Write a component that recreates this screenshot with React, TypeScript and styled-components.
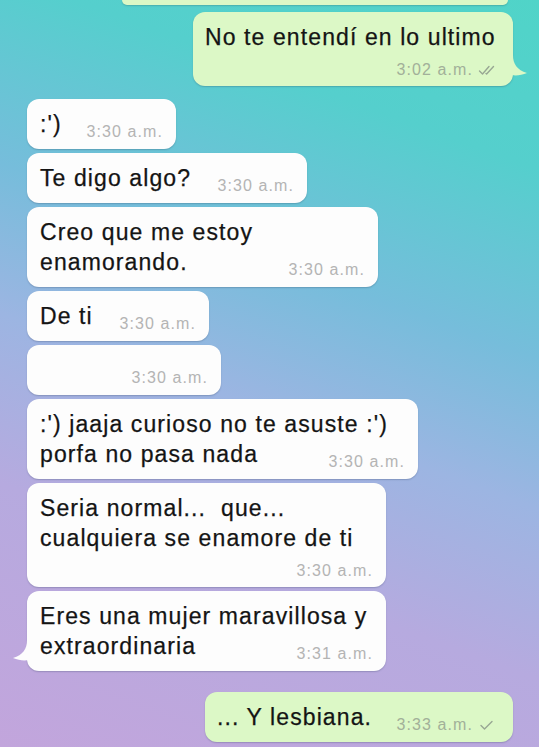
import React from "react";
import styled, { createGlobalStyle, css } from "styled-components";

const Global = createGlobalStyle`
  html, body { margin: 0; padding: 0; }
  body {
    width: 539px;
    height: 747px;
    overflow: hidden;
    font-family: "Liberation Sans", Arial, Helvetica, sans-serif;
  }
`;

type Side = "in" | "out";

const Screen = styled.div`
  width: 539px;
  height: 747px;
  box-sizing: border-box;
  padding: 0 26px 0 27px;
  display: flex;
  flex-direction: column;
  overflow: hidden;
  background: linear-gradient(
    200deg,
    #50d4c8 0%,
    #55cfcd 18%,
    #76bddb 38%,
    #9cb5e2 54%,
    #b6aadf 72%,
    #c2a5dc 100%
  );
`;

const PartialBubble = styled.div`
  align-self: flex-end;
  width: 386px;
  height: 5px;
  margin-right: 5px;
  background: #dcf8c6;
  border-radius: 0 0 12px 12px;
  box-shadow: 0 1px 1.5px rgba(30, 60, 70, 0.22);
`;

const Bubble = styled.div<{ $side: Side; $w: number; $mt: number; $stack?: boolean }>`
  position: relative;
  box-sizing: border-box;
  width: ${(p) => p.$w}px;
  margin-top: ${(p) => p.$mt}px;
  align-self: ${(p) => (p.$side === "out" ? "flex-end" : "flex-start")};
  background: ${(p) => (p.$side === "out" ? "#dcf8c6" : "#fdfdfd")};
  color: ${(p) => (p.$side === "out" ? "#dcf8c6" : "#fdfdfd")};
  border-radius: 12px;
  box-shadow: 0 1px 1.5px rgba(30, 50, 80, 0.24);
  padding: 10px ${(p) => (p.$side === "out" ? 18 : 13)}px ${(p) => (p.$stack ? 7 : 10)}px
    ${(p) => (p.$side === "out" ? 12 : 13)}px;
  display: flex;
  flex-direction: column;
`;

const Line = styled.div`
  font-size: 23px;
  line-height: 30px;
  height: 30px;
  letter-spacing: 1.1px;
  color: #141414;
  -webkit-text-stroke: 0.25px #141414;
  white-space: pre;
`;

const LastRow = styled.div`
  display: flex;
  justify-content: space-between;
  align-items: flex-end;
`;

const MetaRow = styled.div<{ $stack?: boolean }>`
  display: flex;
  justify-content: flex-end;
  align-items: flex-end;
  flex-shrink: 0;
  ${(p) =>
    p.$stack
      ? css`
          height: 27px;
        `
      : css`
          margin-bottom: -2px;
        `}
`;

const Meta = styled.span<{ $side: Side }>`
  display: inline-flex;
  align-items: center;
  gap: 5px;
  font-size: 16px;
  line-height: 18px;
  letter-spacing: 1.1px;
  white-space: nowrap;
  color: ${(p) => (p.$side === "out" ? "#a2b099" : "#b4b4b4")};
`;

const Tick = styled.svg`
  width: 17px;
  height: 11px;
  flex-shrink: 0;
`;

const Tail = styled.svg<{ $side: Side }>`
  position: absolute;
  bottom: 9px;
  width: 20px;
  height: 22px;
  ${(p) =>
    p.$side === "out"
      ? css`
          right: -14px;
        `
      : css`
          left: -14px;
          transform: scaleX(-1);
        `}
`;

type Msg = {
  side: Side;
  lines: string[];
  time: string;
  w: number;
  mt: number;
  stack?: boolean;
  tail?: boolean;
  ticks?: 1 | 2;
};

const messages: Msg[] = [
  { side: "out", lines: ["No te entendí en lo ultimo"], time: "3:02 a.m.", w: 320, mt: 7, stack: true, tail: true, ticks: 2 },
  { side: "in", lines: [":')"], time: "3:30 a.m.", w: 149, mt: 13 },
  { side: "in", lines: ["Te digo algo?"], time: "3:30 a.m.", w: 280, mt: 4 },
  { side: "in", lines: ["Creo que me estoy", "enamorando."], time: "3:30 a.m.", w: 351, mt: 4 },
  { side: "in", lines: ["De ti"], time: "3:30 a.m.", w: 182, mt: 4 },
  { side: "in", lines: [""], time: "3:30 a.m.", w: 194, mt: 4 },
  { side: "in", lines: [":') jaaja curioso no te asuste :')", "porfa no pasa nada"], time: "3:30 a.m.", w: 391, mt: 4 },
  { side: "in", lines: ["Seria normal...  que...", "cualquiera se enamore de ti"], time: "3:30 a.m.", w: 359, mt: 4, stack: true },
  { side: "in", lines: ["Eres una mujer maravillosa y", "extraordinaria"], time: "3:31 a.m.", w: 359, mt: 4, tail: true },
  { side: "out", lines: ["... Y lesbiana."], time: "3:33 a.m.", w: 308, mt: 21, ticks: 1 },
];

function Ticks({ n }: { n: 1 | 2 }) {
  return (
    <Tick viewBox="0 0 17 11" fill="none" stroke="#98a793" strokeWidth="1.4" strokeLinecap="round" strokeLinejoin="round">
      {n === 2 ? (
        <>
          <path d="M1.5 6 L4.5 9 L11 1.5" />
          <path d="M8 8.5 L8.6 9 L15.5 1.5" />
        </>
      ) : (
        <path d="M3 5.5 L6.5 9 L14 1.5" />
      )}
    </Tick>
  );
}

function Message({ m }: { m: Msg }) {
  const meta = (
    <MetaRow $stack={m.stack}>
      <Meta $side={m.side}>
        {m.time}
        {m.ticks ? <Ticks n={m.ticks} /> : null}
      </Meta>
    </MetaRow>
  );
  const head = m.stack ? m.lines : m.lines.slice(0, -1);
  const last = m.lines[m.lines.length - 1];
  return (
    <Bubble $side={m.side} $w={m.w} $mt={m.mt} $stack={m.stack}>
      {head.map((l, i) => (
        <Line key={i}>{l}</Line>
      ))}
      {m.stack ? (
        meta
      ) : (
        <LastRow>
          <Line>{last}</Line>
          {meta}
        </LastRow>
      )}
      {m.tail ? (
        <Tail $side={m.side} viewBox="0 0 20 22">
          <path d="M0 0 L6 0 C6 9 10 15 20 18 C13 21 6 21 0 19 Z" fill="currentColor" />
        </Tail>
      ) : null}
    </Bubble>
  );
}

export default function App() {
  return (
    <>
      <Global />
      <Screen>
        <PartialBubble />
        {messages.map((m, i) => (
          <Message key={i} m={m} />
        ))}
      </Screen>
    </>
  );
}
